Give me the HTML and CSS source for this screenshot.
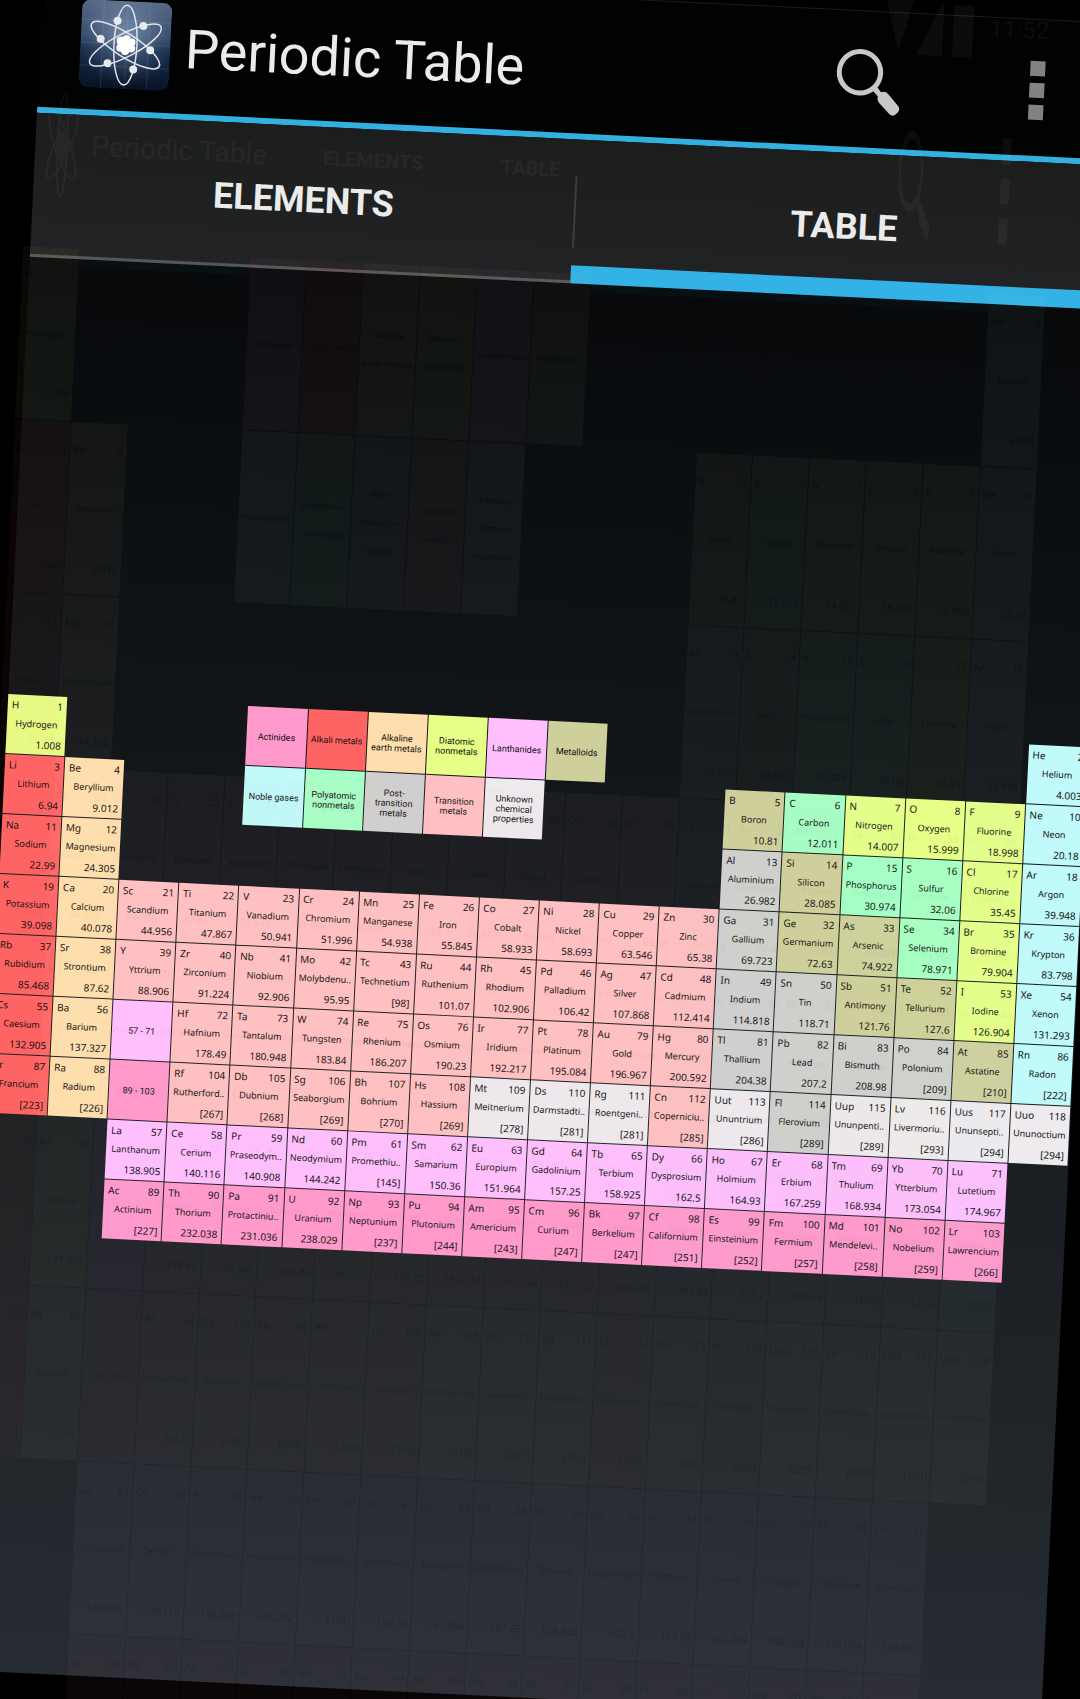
FILE: index.html
```html
<!DOCTYPE html>
<html lang="en">
<head>
<meta charset="utf-8">
<meta name="viewport" content="width=device-width, initial-scale=1">
<title>Periodic Table</title>
<link rel="stylesheet" href="styles.css">
</head>
<body>
<div class="screen">
  <header class="action-bar">
    <svg class="app-icon" viewBox="0 0 90 88" aria-hidden="true">
      <defs>
        <linearGradient id="iconBase" x1="0" y1="0" x2="0" y2="1">
          <stop offset="0" stop-color="#7186a4"/>
          <stop offset="0.42" stop-color="#41587a"/>
          <stop offset="0.55" stop-color="#1d3557"/>
          <stop offset="1" stop-color="#071022"/>
        </linearGradient>
        <radialGradient id="iconGlow" cx="0.5" cy="0.42" r="0.55">
          <stop offset="0" stop-color="#b9d2f0" stop-opacity="0.45"/>
          <stop offset="1" stop-color="#0a1830" stop-opacity="0.25"/>
        </radialGradient>
      </defs>
      <rect width="90" height="88" rx="9" fill="url(#iconBase)"/>
      <rect width="90" height="88" rx="9" fill="url(#iconGlow)"/>
      <path d="M22 0V88M46 0V88M68 0V88M0 20H90M0 43H90M0 66H90" stroke="#a8c4e8" stroke-opacity="0.14" fill="none"/>
      <g fill="none" stroke="#dfe5ec" stroke-width="1.5">
        <ellipse cx="45" cy="44" rx="11.5" ry="40"/>
        <ellipse cx="45" cy="44" rx="11.5" ry="40" transform="rotate(60 45 44)"/>
        <ellipse cx="45" cy="44" rx="11.5" ry="40" transform="rotate(-60 45 44)"/>
      </g>
      <g fill="#e6e9ee">
        <circle cx="36" cy="20" r="4"/><circle cx="62" cy="24" r="4"/>
        <circle cx="20" cy="39" r="4"/><circle cx="70" cy="48" r="4"/>
        <circle cx="28" cy="63" r="4"/><circle cx="54" cy="68" r="4"/>
      </g>
      <g fill="#fff">
        <circle cx="45" cy="44" r="6"/><circle cx="40" cy="40" r="4"/><circle cx="46" cy="38" r="4"/>
        <circle cx="51" cy="41" r="4"/><circle cx="51" cy="47" r="4"/><circle cx="45" cy="50" r="4"/><circle cx="40" cy="47" r="4"/>
      </g>
    </svg>
    <h1 class="title">Periodic Table</h1>
    <button class="icon-button search" type="button" aria-label="Search">
      <svg viewBox="0 0 66 66" aria-hidden="true">
        <circle cx="24" cy="24" r="20.7" fill="none" stroke="#c8c8c8" stroke-width="5"/>
        <path d="M37 41L41 37L46 43Q50 41 53 44L64 56Q66 59 64 62L61 65Q58 67 55 64L44 53Q42 50 43 47Z" fill="#c8c8c8"/>
      </svg>
    </button>
    <button class="icon-button more" type="button" aria-label="More options">
      <span></span><span></span><span></span>
    </button>
  </header>

  <nav class="tabs">
    <button class="tab" type="button">ELEMENTS</button>
    <button class="tab active" type="button">TABLE</button>
  </nav>

  <main class="content">
    <table class="periodic" id="periodic"></table>
  </main>

  <div class="afterimage" aria-hidden="true">
    <div class="after-status">
      <svg viewBox="0 0 90 60" preserveAspectRatio="none"><path d="M0 4H28L14 58ZM58 4V60H32ZM68 8H88V60H68Z" fill="#fff"/></svg>
      <span>11:52</span>
    </div>
    <div class="after-bar">
      <svg class="after-atom" viewBox="0 0 38 112"><g fill="none" stroke="#fff" stroke-width="2"><ellipse cx="19" cy="56" rx="5" ry="51"/><ellipse cx="19" cy="56" rx="8" ry="36" transform="rotate(20 19 56)"/><ellipse cx="19" cy="56" rx="8" ry="36" transform="rotate(-20 19 56)"/></g><ellipse cx="19" cy="56" rx="5" ry="14" fill="#fff"/></svg>
      <span class="after-title">Periodic Table</span>
      <span class="after-tab">ELEMENTS</span>
      <span class="after-tab on">TABLE</span>
      <svg class="after-search" viewBox="0 0 66 66" preserveAspectRatio="none"><circle cx="24" cy="24" r="21" fill="none" stroke="#fff" stroke-width="5"/><path d="M38 41L41 38L64 56L61 65L44 53Z" fill="#fff"/></svg>
      <span class="after-more"><i></i><i></i><i></i></span>
    </div>
    <table class="periodic" id="after-periodic"></table>
  </div>
</div>
<script src="script.js"></script>
</body>
</html>
```
FILE: styles.css
```css
* { box-sizing: border-box; }

html, body {
  margin: 0;
  height: 100%;
  overflow: hidden;
  background: #000;
}

body { font-family: Roboto, "Noto Sans", sans-serif; }

button {
  padding: 0;
  border: 0;
  background: none;
  color: inherit;
  font: inherit;
}

.screen {
  position: relative;
  display: flex;
  flex-direction: column;
  width: calc(100% + 2px);
  min-height: calc(100vh + 3px);
  transform: translate(44px, -30px) rotate(2.82deg);
  transform-origin: 0 0;
  background: linear-gradient(#000 0, #010203 130px, #07090b 300px, #101417 700px, #1d2125 1260px, #262c32 100%);
}

/* Action bar */
.action-bar {
  display: flex;
  align-items: center;
  height: 143px;
  padding: 4px 77px 0 40px;
  border-top: 1px solid #1c1c1c;
  border-bottom: 6px solid #33b0e0;
  background: #010202;
}

.app-icon { width: 90px; height: 88px; }

.title {
  flex: 1;
  margin: 0 0 0 15px;
  padding-top: 4px;
  color: #ebebeb;
  font-size: 54px;
  font-weight: 400;
  line-height: 64px;
}

.search { width: 66px; height: 66px; margin-right: 128px; }
.search svg { display: block; }

.more { display: flex; flex-direction: column; gap: 7px; }
.more span { width: 15px; height: 15px; background: #828282; }

/* Tabs */
.tabs {
  display: flex;
  height: 144px;
  background: linear-gradient(#1c1e1e, #222324);
}

.tab {
  flex: 1;
  position: relative;
  padding-top: 6px;
  border-bottom: 3px solid #555;
  color: #ebebeb;
  font-size: 36px;
  font-weight: 700;
}

.tab.active { border-bottom: 18px solid #33b3e5; padding-top: 21px; }

.tab.active::before {
  content: "";
  position: absolute;
  left: 0;
  top: 36px;
  width: 2px;
  height: 72px;
  background: #3c3e3e;
}

/* Table of elements */
.content {
  flex: 1;
  display: flex;
  align-items: center;
}

.periodic {
  width: 100%;
  table-layout: fixed;
  border-collapse: separate;
  border-spacing: 0;
  color: #111;
}

.periodic td { height: 60px; padding: 0 1px 1px 0; }

.cell {
  display: flex;
  flex-direction: column;
  justify-content: space-between;
  height: 59px;
  padding: 3px 4px;
  font-family: "Noto Sans", sans-serif;
  font-size: 10px;
  line-height: 14px;
}

.head { display: flex; justify-content: space-between; }
.name { display: flex; justify-content: center; font-size: 9px; white-space: nowrap; }
.mass { text-align: right; }

.label {
  justify-content: center;
  padding: 2px 3px 0;
  font-family: Roboto, sans-serif;
  font-size: 9px;
  line-height: 10px;
  text-align: center;
}

.actinide { background: #ff99cc; }
.alkali { background: #ff6464; }
.alkaline { background: #ffdead; }
.diatomic { background: #e6ff87; }
.lanthanide { background: #ffbfff; }
.metalloid { background: #cfcf9b; }
.noble { background: #c0fafa; }
.polyatomic { background: #a5ffc5; }
.post { background: #cfcfcf; }
.transition { background: #ffc0c2; }
.unknown { background: #eeeaee; }

/* Faint afterimage of the landscape view left on the panel */
.afterimage {
  position: absolute;
  left: -7px;
  top: -18px;
  width: calc(100% - 58px);
  color: #fff;
  opacity: 0.04;
  pointer-events: none;
}

.after-status {
  display: flex;
  justify-content: flex-end;
  align-items: center;
  gap: 14px;
  height: 60px;
  padding-right: 10px;
  font-size: 24px;
}

.after-status svg { width: 90px; height: 60px; }

.after-bar {
  display: flex;
  align-items: center;
  height: 253px;
  padding: 20px 42px 0 15px;
  border-bottom: 10px solid #33b5e5;
}

.after-atom { width: 38px; height: 112px; }
.after-title { width: 232px; margin-left: 10px; font-size: 28px; }
.after-tab { width: 128px; font-size: 20px; font-weight: 700; }
.after-tab.on { margin-left: 50px; flex: 1; }
.after-search { width: 35px; height: 114px; margin-right: 68px; }
.after-more { display: flex; flex-direction: column; gap: 14px; }
.after-more i { width: 9px; height: 26px; background: #fff; }

.afterimage .periodic { color: #000; margin-top: -18px; }
.afterimage .periodic td { height: 173px; }
.afterimage .cell { height: 172px; padding: 20px 3px; }
.afterimage .label { padding: 0 2px; line-height: 28px; }
```
FILE: script.js
```js
// One line per table row. "." is an empty cell; an element is
// kind|symbol|number|name|mass and a label is kind|text.
const kinds = {
  A: "actinide", K: "alkali", E: "alkaline", D: "diatomic", L: "lanthanide", M: "metalloid",
  N: "noble", P: "polyatomic", O: "post", T: "transition", U: "unknown"
};

const rows = [
  "D|H|1|Hydrogen|1.008;.;.;.;A|Actinides;K|Alkali metals;E|Alkaline earth metals;D|Diatomic nonmetals;L|Lanthanides;M|Metalloids;.;.;.;.;.;.;.;N|He|2|Helium|4.003",
  "K|Li|3|Lithium|6.94;E|Be|4|Beryllium|9.012;.;.;N|Noble gases;P|Polyatomic nonmetals;O|Post-transition metals;T|Transition metals;U|Unknown chemical properties;.;.;.;M|B|5|Boron|10.81;P|C|6|Carbon|12.011;D|N|7|Nitrogen|14.007;D|O|8|Oxygen|15.999;D|F|9|Fluorine|18.998;N|Ne|10|Neon|20.18",
  "K|Na|11|Sodium|22.99;E|Mg|12|Magnesium|24.305;.;.;.;.;.;.;.;.;.;.;O|Al|13|Aluminium|26.982;M|Si|14|Silicon|28.085;P|P|15|Phosphorus|30.974;P|S|16|Sulfur|32.06;D|Cl|17|Chlorine|35.45;N|Ar|18|Argon|39.948",
  "K|K|19|Potassium|39.098;E|Ca|20|Calcium|40.078;T|Sc|21|Scandium|44.956;T|Ti|22|Titanium|47.867;T|V|23|Vanadium|50.941;T|Cr|24|Chromium|51.996;T|Mn|25|Manganese|54.938;T|Fe|26|Iron|55.845;T|Co|27|Cobalt|58.933;T|Ni|28|Nickel|58.693;T|Cu|29|Copper|63.546;T|Zn|30|Zinc|65.38;O|Ga|31|Gallium|69.723;M|Ge|32|Germanium|72.63;M|As|33|Arsenic|74.922;P|Se|34|Selenium|78.971;D|Br|35|Bromine|79.904;N|Kr|36|Krypton|83.798",
  "K|Rb|37|Rubidium|85.468;E|Sr|38|Strontium|87.62;T|Y|39|Yttrium|88.906;T|Zr|40|Zirconium|91.224;T|Nb|41|Niobium|92.906;T|Mo|42|Molybdenu..|95.95;T|Tc|43|Technetium|[98];T|Ru|44|Ruthenium|101.07;T|Rh|45|Rhodium|102.906;T|Pd|46|Palladium|106.42;T|Ag|47|Silver|107.868;T|Cd|48|Cadmium|112.414;O|In|49|Indium|114.818;O|Sn|50|Tin|118.71;M|Sb|51|Antimony|121.76;M|Te|52|Tellurium|127.6;D|I|53|Iodine|126.904;N|Xe|54|Xenon|131.293",
  "K|Cs|55|Caesium|132.905;E|Ba|56|Barium|137.327;L|57 - 71;T|Hf|72|Hafnium|178.49;T|Ta|73|Tantalum|180.948;T|W|74|Tungsten|183.84;T|Re|75|Rhenium|186.207;T|Os|76|Osmium|190.23;T|Ir|77|Iridium|192.217;T|Pt|78|Platinum|195.084;T|Au|79|Gold|196.967;T|Hg|80|Mercury|200.592;O|Tl|81|Thallium|204.38;O|Pb|82|Lead|207.2;O|Bi|83|Bismuth|208.98;O|Po|84|Polonium|[209];M|At|85|Astatine|[210];N|Rn|86|Radon|[222]",
  "K|Fr|87|Francium|[223];E|Ra|88|Radium|[226];A|89 - 103;T|Rf|104|Rutherford..|[267];T|Db|105|Dubnium|[268];T|Sg|106|Seaborgium|[269];T|Bh|107|Bohrium|[270];T|Hs|108|Hassium|[269];U|Mt|109|Meitnerium|[278];U|Ds|110|Darmstadti..|[281];U|Rg|111|Roentgeni..|[281];T|Cn|112|Coperniciu..|[285];U|Uut|113|Ununtrium|[286];O|Fl|114|Flerovium|[289];U|Uup|115|Ununpenti..|[289];U|Lv|116|Livermoriu..|[293];U|Uus|117|Ununsepti..|[294];U|Uuo|118|Ununoctium|[294]",
  ".;.;L|La|57|Lanthanum|138.905;L|Ce|58|Cerium|140.116;L|Pr|59|Praseodym..|140.908;L|Nd|60|Neodymium|144.242;L|Pm|61|Promethiu..|[145];L|Sm|62|Samarium|150.36;L|Eu|63|Europium|151.964;L|Gd|64|Gadolinium|157.25;L|Tb|65|Terbium|158.925;L|Dy|66|Dysprosium|162.5;L|Ho|67|Holmium|164.93;L|Er|68|Erbium|167.259;L|Tm|69|Thulium|168.934;L|Yb|70|Ytterbium|173.054;L|Lu|71|Lutetium|174.967;.",
  ".;.;A|Ac|89|Actinium|[227];A|Th|90|Thorium|232.038;A|Pa|91|Protactiniu..|231.036;A|U|92|Uranium|238.029;A|Np|93|Neptunium|[237];A|Pu|94|Plutonium|[244];A|Am|95|Americium|[243];A|Cm|96|Curium|[247];A|Bk|97|Berkelium|[247];A|Cf|98|Californium|[251];A|Es|99|Einsteinium|[252];A|Fm|100|Fermium|[257];A|Md|101|Mendelevi..|[258];A|No|102|Nobelium|[259];A|Lr|103|Lawrencium|[266];."
];

function cellHtml(entry) {
  if (entry === ".") return "<td></td>";
  const [kind, symbol, number, name, mass] = entry.split("|");
  if (!number) return `<td><div class="cell label ${kinds[kind]}">${symbol}</div></td>`;
  return `<td><div class="cell ${kinds[kind]}">` +
    `<div class="head"><span>${symbol}</span><span>${number}</span></div>` +
    `<div class="name">${name}</div><div class="mass">${mass}</div></div></td>`;
}

const body = "<tbody>" + rows.map(row => "<tr>" + row.split(";").map(cellHtml).join("") + "</tr>").join("") + "</tbody>";
document.getElementById("periodic").innerHTML = body;
document.getElementById("after-periodic").innerHTML = body;
```
